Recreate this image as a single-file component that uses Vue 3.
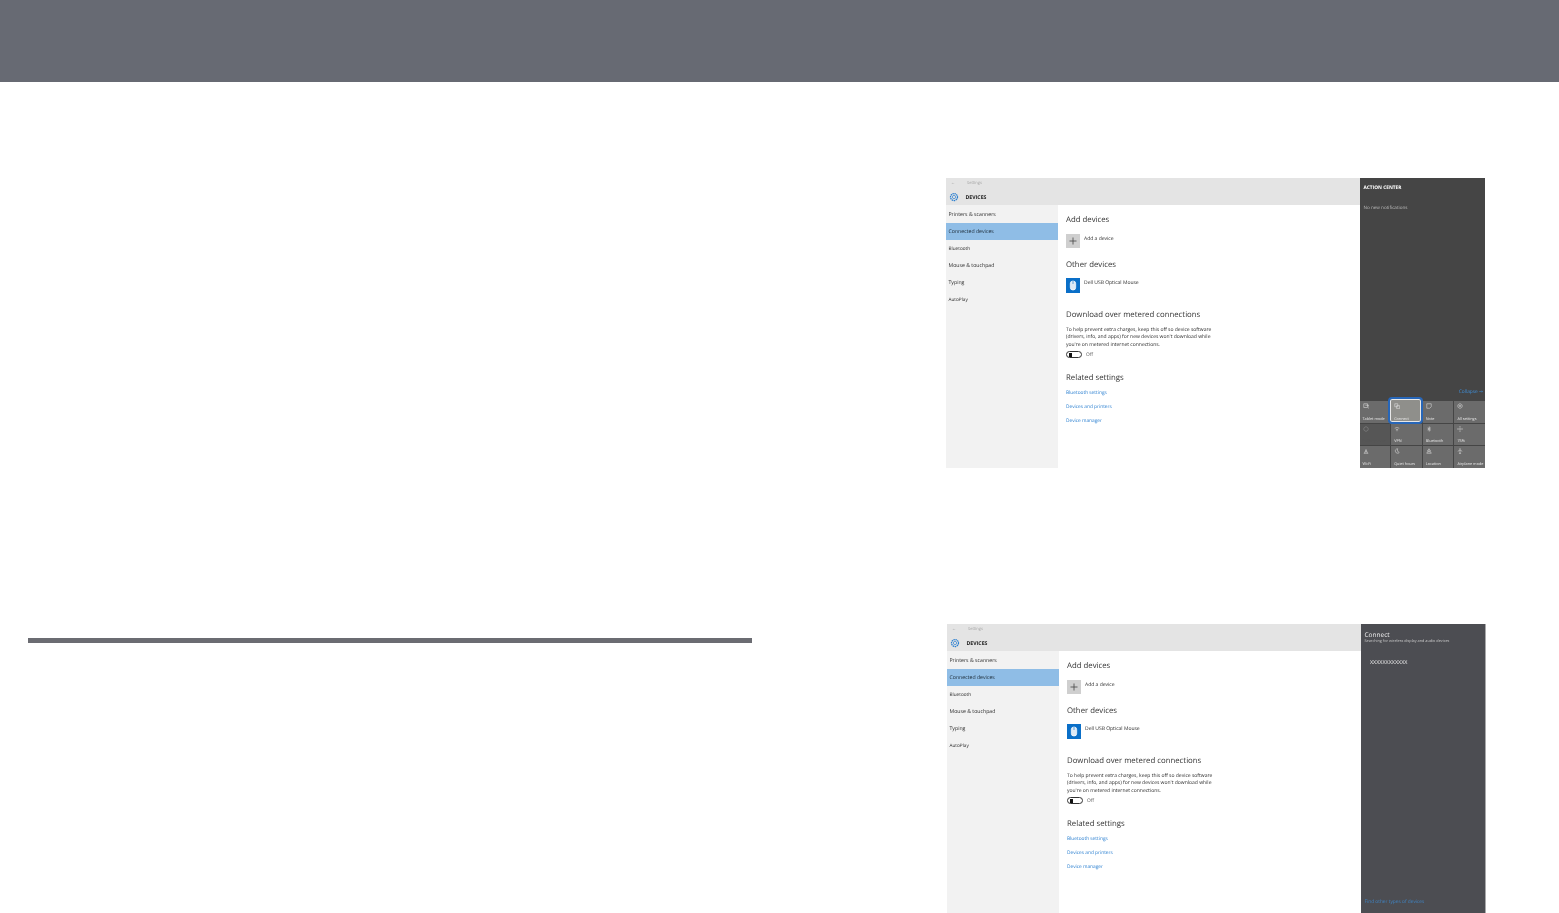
<template>
  <div class="page">
    <header class="topbar"></header>
    <div class="columns">
      <div class="left">
        <div class="rule"></div>
      </div>
      <div class="right">
        <section v-for="shot in shots" :key="shot.id" :class="['shot', shot.id]">
          <div class="window">
            <div class="titlebar">
              <div class="crumb"><span class="arrow">←</span><span>Settings</span></div>
              <div class="heading">
                <svg class="gear" viewBox="0 0 16 16">
                  <circle cx="8" cy="8" r="5.600" fill="none" stroke="#2a7fd0" stroke-width="2" stroke-dasharray="2.400 .9" />
                  <circle cx="8" cy="8" r="2.600" fill="none" stroke="#2a7fd0" stroke-width="1.100" />
                </svg>
                <span>DEVICES</span>
              </div>
            </div>
            <div class="content">
              <nav class="sidebar">
                <div
                  v-for="item in navItems"
                  :key="item.label"
                  :class="['nav-item', { selected: item.selected, small: item.small }]"
                >{{ item.label }}</div>
              </nav>
              <main class="settings">
                <h2 class="first">Add devices</h2>
                <div class="device">
                  <div class="tile plus">
                    <svg viewBox="0 0 14 14"><path d="M7 3.500v7M3.500 7h7" stroke="#444" stroke-width=".8" /></svg>
                  </div>
                  <span>Add a device</span>
                </div>
                <h2 class="other">Other devices</h2>
                <div class="device mouse-row">
                  <div class="tile mouse">
                    <svg viewBox="0 0 14 15">
                      <rect x="4.300" y="3" width="5.400" height="9" rx="2.600" fill="#dfeaf5" stroke="#fff" stroke-width=".7" />
                      <path d="M7 3v3" stroke="#0a6fc8" stroke-width=".6" />
                    </svg>
                  </div>
                  <span>Dell USB Optical Mouse</span>
                </div>
                <h2 class="download">Download over metered connections</h2>
                <p class="help">
                  To help prevent extra charges, keep this off so device software<br />
                  (drivers, info, and apps) for new devices won't download while<br />
                  you're on metered internet connections.
                </p>
                <div class="toggle-row">
                  <div class="toggle"><div class="knob"></div></div>
                  <span>Off</span>
                </div>
                <h2 class="related">Related settings</h2>
                <a v-for="link in links" :key="link" class="link">{{ link }}</a>
              </main>
            </div>
          </div>

          <aside v-if="shot.id === 'action'" class="panel">
            <div class="panel-title">ACTION CENTER</div>
            <div class="panel-note">No new notifications</div>
            <div class="collapse">Collapse <span class="collapse-arrow">→</span></div>
            <div class="quick">
              <div
                v-for="t in quickTiles"
                :key="t.label"
                :class="['quick-tile', { active: t.label === 'Connect', off: t.off }]"
              >
                <svg class="quick-icon" viewBox="0 0 8 8"><path :d="t.d" fill="none" stroke="#e4e4e4" stroke-width=".7" /></svg>
                <span>{{ t.label }}</span>
              </div>
            </div>
          </aside>
          <aside v-else class="panel connect-panel">
            <div class="connect-title">Connect</div>
            <div class="connect-sub">Searching for wireless display and audio devices</div>
            <div class="connect-device">XXXXXXXXXXXX</div>
            <div class="find">Find other types of devices</div>
          </aside>
        </section>
      </div>
    </div>
  </div>
</template>

<script setup>
const shots = [{ id: 'action' }, { id: 'connect' }]

const navItems = [
  { label: 'Printers & scanners' },
  { label: 'Connected devices', selected: true },
  { label: 'Bluetooth', small: true },
  { label: 'Mouse & touchpad' },
  { label: 'Typing' },
  { label: 'AutoPlay', small: true },
]

const links = ['Bluetooth settings', 'Devices and printers', 'Device manager']

const quickTiles = [
  { label: 'Tablet mode', d: 'M1 1h5v5H1zM3 3h5v5' },
  { label: 'Connect', d: 'M1 1h4v4H1zM3.500 3.500h4v4h-4z' },
  { label: 'Note', d: 'M1 1h6v4L5 7H1z' },
  { label: 'All settings', d: 'M4 1a3 3 0 1 0 .01 0zM4 3a1 1 0 1 0 .01 0z' },
  { label: 'Battery saver', d: 'M4 1a3 3 0 1 0 .01 0z', off: true },
  { label: 'VPN', d: 'M1 3q3-2 6 0M2.500 5q1.500-1 3 0M4 5v2' },
  { label: 'Bluetooth', d: 'M4 1v6l2-1.700-4-2.600M4 1l2 1.700-4 2.600' },
  { label: '75%', d: 'M4 2.500a1.500 1.500 0 1 0 .01 0zM4 0v1.500M4 6.500V8M0 4h1.500M6.500 4H8' },
  { label: 'Wi-Fi', d: 'M1 7h6M2 7l2-5 2 5M3 5h2' },
  { label: 'Quiet hours', d: 'M5 1a3 3 0 1 0 2 5 3.500 3.500 0 0 1-2-5z' },
  { label: 'Location', d: 'M4 1l2 3H2zM1 7h6L6 5H2z' },
  { label: 'Airplane mode', d: 'M4 0v8M1 4.500L4 2.500l3 2M2.500 7.500L4 6.500l1.500 1' },
]
</script>

<style>
html,
body {
  margin: 0;
  background: #fff;
  overflow: hidden;
}
</style>

<style scoped>
.page {
  height: 913px;
  overflow: hidden;
  background: #fff;
  font-family: "Open Sans", "Liberation Sans", sans-serif;
  text-rendering: geometricPrecision;
}
.topbar {
  height: 82px;
  background: #676a73;
}
.columns {
  display: flex;
}
.left {
  width: 724px;
  margin-left: 28px;
  padding-top: 556px;
}
.rule {
  height: 5px;
  background: #6b6c72;
}
.right {
  margin-left: 194px;
  padding-top: 96px;
}
.shot {
  display: flex;
  width: 540px;
  height: 290px;
  background: #fff;
  filter: blur(0.35px);
}
.shot.connect {
  margin-top: 156px;
  margin-left: 1px;
}
.window {
  width: 413.500px;
  flex-shrink: 0;
  display: flex;
  flex-direction: column;
}
.titlebar {
  height: 27px;
  background: #e4e4e4;
  flex-shrink: 0;
}
.crumb {
  display: flex;
  align-items: center;
  gap: 12px;
  height: 10px;
  padding: 0 0 0 5px;
  font-size: 4px;
  color: #a4a4a4;
}
.arrow {
  width: 4px;
}
.heading {
  display: flex;
  align-items: center;
  gap: 7px;
  height: 14px;
  padding: 2px 0 0 2.500px;
  font-size: 5.200px;
  font-weight: 700;
  color: #222;
}
.gear {
  width: 10px;
  height: 10px;
}
.content {
  flex: 1;
  display: flex;
}
.sidebar {
  width: 111.500px;
  flex-shrink: 0;
  background: #f2f2f2;
  padding-top: 1px;
}
.nav-item {
  height: 17px;
  line-height: 16px;
  padding-left: 2.500px;
  font-size: 5.200px;
  color: #2c2c2c;
}
.nav-item.small {
  line-height: 18px;
  font-size: 4.700px;
}
.nav-item.selected {
  background: #8fbde6;
  color: #1c2a36;
}
.settings {
  flex: 1;
  padding-left: 8.500px;
  color: #333;
}
h2 {
  margin: 0;
  height: 14px;
  line-height: 16px;
  font-size: 7.800px;
  font-weight: 400;
  white-space: nowrap;
}
h2.first {
  margin-top: 7px;
}
h2.other {
  margin-top: 9px;
}
h2.download {
  margin-top: 14px;
}
h2.related {
  margin-top: 12px;
}
.device {
  display: flex;
  gap: 4px;
  margin-top: 8px;
  font-size: 5px;
  line-height: 11px;
  color: #2c2c2c;
}
.mouse-row {
  margin-top: 7px;
}
.tile {
  width: 14px;
  height: 14px;
  flex-shrink: 0;
}
.tile svg {
  display: block;
  width: 100%;
  height: 100%;
}
.plus {
  background: #cfcfcf;
}
.mouse {
  height: 15px;
  background: #0a6fc8;
}
.help {
  margin: 6px 0 0;
  font-size: 5px;
  line-height: 7.300px;
  color: #2c2c2c;
  white-space: nowrap;
}
.toggle-row {
  display: flex;
  align-items: center;
  gap: 4px;
  margin-top: 2.500px;
  font-size: 4.800px;
  color: #555;
}
.toggle {
  width: 12px;
  height: 5px;
  border: 1px solid #333;
  border-radius: 4px;
  display: flex;
  align-items: center;
  padding-left: 2px;
}
.knob {
  width: 3px;
  height: 4px;
  background: #111;
}
.link {
  display: block;
  height: 14px;
  line-height: 16px;
  margin-top: 1px;
  font-size: 4.800px;
  color: #2a7fd0;
}
.link + .link {
  margin-top: 0;
}
.panel {
  width: 125.500px;
  flex-shrink: 0;
  background: #454545;
  display: flex;
  flex-direction: column;
  color: #e8e8e8;
  position: relative;
  z-index: 1;
}
.panel-title {
  margin: 7px 0 0 4px;
  height: 7px;
  line-height: 7px;
  font-size: 4.800px;
  font-weight: 700;
  color: #fff;
}
.panel-note {
  margin: 13px 0 0 4px;
  height: 7px;
  line-height: 7px;
  font-size: 4.600px;
  color: #bdbdbd;
}
.collapse {
  margin-top: auto;
  padding-right: 2px;
  height: 8px;
  line-height: 8px;
  text-align: right;
  font-size: 4.800px;
  color: #3f8ed8;
}
.collapse-arrow {
  font-family: "DejaVu Sans", sans-serif;
}
.quick {
  margin-top: 5px;
  display: grid;
  grid-template-columns: repeat(4, 1fr);
  grid-template-rows: repeat(3, 1fr);
  gap: 1px;
  height: 67px;
}
.quick-tile {
  display: flex;
  flex-direction: column;
  justify-content: space-between;
  padding: 2px 0 1px 3px;
  background: #6b6b6b;
  font-size: 3.800px;
  line-height: 5px;
  color: #e8e8e8;
  white-space: nowrap;
  overflow: hidden;
}
.quick-tile.off {
  background: #565656;
  color: #565656;
}
.quick-tile.off .quick-icon {
  opacity: 0.4;
}
.quick-tile.active {
  position: relative;
  overflow: visible;
  background: #8f8f8b;
  z-index: 1;
}
.quick-tile.active::after {
  content: "";
  position: absolute;
  top: -4px;
  left: -3px;
  right: -1px;
  bottom: -1px;
  z-index: -1;
  border: 2px solid #2766b8;
  border-radius: 4px;
  background: #8f8f8b;
  box-shadow: inset 0 0 0 1px #e8e8e8;
}
.quick-icon {
  width: 6px;
  height: 6px;
}
.connect-panel {
  background: #4c4d52;
  border-right: 1px solid #a9a9ab;
  width: 124.500px;
}
.connect-title {
  margin: 6px 0 0 4px;
  height: 9px;
  line-height: 9px;
  font-size: 6.500px;
  color: #f0f0f0;
}
.connect-sub {
  margin: 0 0 0 4px;
  height: 7px;
  line-height: 5px;
  font-size: 3.800px;
  color: #c8c8c8;
}
.connect-device {
  margin: 12px 0 0 9.500px;
  height: 8px;
  line-height: 8px;
  font-size: 5.400px;
  color: #f2f2f2;
}
.find {
  margin: auto 0 8px 4px;
  font-size: 4.800px;
  line-height: 7px;
  color: #3f84c4;
}
</style>
